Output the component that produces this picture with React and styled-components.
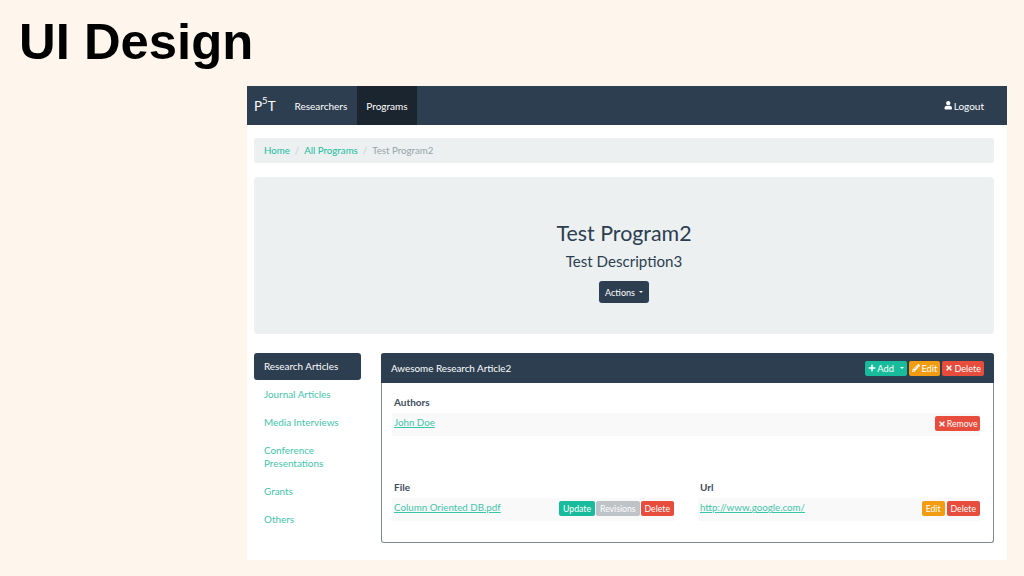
import React from 'react';
import styled, { createGlobalStyle } from 'styled-components';
import { FaUser, FaPlus, FaPencilAlt, FaTimes } from 'react-icons/fa';

const Global = createGlobalStyle`
  html, body { margin: 0; padding: 0; width: 1024px; height: 576px; overflow: hidden; background: #fef6ec; }
  * { box-sizing: border-box; }
`;

const Slide = styled.div`
  width: 1024px;
  height: 576px;
  background: #fef6ec;
  display: flex;
  flex-direction: column;
`;
const SlideTitle = styled.h1`
  margin: 0;
  height: 86px;
  padding: 13px 0 0 19px;
  font: bold 50.8px/58px "Liberation Sans", Arial, sans-serif;
  color: #000;
`;
const Page = styled.div`
  width: 760px;
  height: 474px;
  margin-left: 247px;
  background: #fff;
  display: flex;
  flex-direction: column;
  font-family: Lato, sans-serif;
  color: #2c3e50;
`;
const Navbar = styled.nav`
  height: 39px;
  flex: none;
  background: #2c3e50;
  display: flex;
  align-items: stretch;
  color: #fff;
  font-size: 10px;
  padding-left: 7px;
`;
const Brand = styled.div`
  font-size: 13.5px;
  display: flex;
  align-items: center;
  width: 31px;
  sup { font-size: 9.5px; line-height: 0; position: relative; top: -1px; vertical-align: super; }
`;
const NavItem = styled.div`
  display: flex;
  align-items: center;
  padding: 0 9.5px;
  background: ${p => (p.$active ? '#1a252f' : 'transparent')};
`;
const NavRight = styled.div`
  margin-left: auto;
  display: flex;
  align-items: center;
  gap: 1.5px;
  padding: 0 23px 0 0;
  svg { font-size: 8.5px; }
`;
const Breadcrumb = styled.div`
  margin: 13px 13px 0 7px;
  height: 25px;
  flex: none;
  background: #ecf0f1;
  border-radius: 3px;
  display: flex;
  align-items: center;
  padding: 0 10px 2px;
  font-size: 9.7px;
  color: #95a5a6;
`;
const CrumbLink = styled.span`color: #18bc9c;`;
const Sep = styled.span`
  color: #c6cfd2;
  margin: 0 5px;
`;
const Jumbotron = styled.section`
  margin: 14px 13px 0 7px;
  height: 157px;
  flex: none;
  background: #ecf0f1;
  border-radius: 4px;
  display: flex;
  flex-direction: column;
  align-items: center;
  padding-top: 42px;
`;
const JumboTitle = styled.h2`
  margin: 0;
  font-size: 21.4px;
  line-height: 28px;
  font-weight: 400;
`;
const JumboSub = styled.p`
  margin: 3px 0 0;
  font-size: 15.1px;
  line-height: 22px;
`;
const ActionsBtn = styled.div`
  margin-top: 9px;
  width: 50px;
  height: 22px;
  background: #2c3e50;
  color: #fff;
  border-radius: 3px;
  font-size: 9px;
  display: flex;
  align-items: center;
  justify-content: center;
  gap: 4px;
`;
const Caret = styled.span`
  display: inline-block;
  width: 0;
  height: 0;
  margin-left: ${p => p.$offset || 0}px;
  border-left: 2.5px solid transparent;
  border-right: 2.5px solid transparent;
  border-top: 2.5px solid currentColor;
`;
const Columns = styled.div`
  margin: 19px 13px 0 7px;
  display: flex;
  align-items: flex-start;
  gap: 20px;
`;
const Sidebar = styled.aside`
  width: 107px;
  flex: none;
  display: flex;
  flex-direction: column;
  gap: 1px;
  font-size: 9.9px;
`;
const SideItem = styled.div`
  padding: 6.7px 10px;
  line-height: 13.6px;
  border-radius: 3px;
  background: ${p => (p.$active ? '#2c3e50' : 'transparent')};
  color: ${p => (p.$active ? '#fff' : '#18bc9c')};
  opacity: ${p => (p.$active ? 1 : 0.85)};
`;
const Panel = styled.section`
  flex: 1;
  height: 190px;
  border: 1px solid #7f8c8d;
  border-top: 0;
  border-radius: 3px;
  display: flex;
  flex-direction: column;
`;
const PanelHead = styled.header`
  height: 30px;
  flex: none;
  margin: 0 -1px;
  background: #2c3e50;
  border-radius: 3px 3px 0 0;
  color: #fff;
  font-size: 9.85px;
  display: flex;
  align-items: center;
  justify-content: space-between;
  padding: 0 10px 1px;
`;
const BtnGroup = styled.div`
  display: flex;
  gap: ${p => p.$gap || 2}px;
  margin-top: ${p => p.$top || 0}px;
`;
const Btn = styled.span`
  height: 15px;
  padding: 0 ${p => p.$pad ?? 4}px;
  display: inline-flex;
  align-items: center;
  gap: 1px;
  border-radius: 2px;
  font-size: ${p => p.$size || 8.7}px;
  color: #fff;
  background: ${p => ({ green: '#18bc9c', orange: '#f39c12', red: '#e74c3c', gray: '#bdc3c7' }[p.$color])};
  svg { font-size: 8px; }
`;
const PanelBody = styled.div`
  padding: 13px 13px 0 12px;
  display: flex;
  flex-direction: column;
`;
const Label = styled.div`
  font-size: 10px;
  line-height: 13px;
  font-weight: 700;
  color: #3e4d5c;
`;
const Row = styled.div`
  margin: 4px 0 0 -2px;
  height: 23px;
  background: #f9f9f9;
  display: flex;
  justify-content: space-between;
  align-items: flex-start;
  padding: 3px 0 0 2px;
`;
const FileLink = styled.a`
  color: #18bc9c;
  opacity: 0.85;
  text-decoration: underline;
  font-size: 9.75px;
  line-height: 13px;
`;
const TwoCols = styled.div`
  margin-top: 45px;
  display: grid;
  grid-template-columns: 280px 280px;
  column-gap: 26px;
`;

export default function App() {
  return (
    <Slide>
      <Global />
      <SlideTitle>UI Design</SlideTitle>
      <Page>
        <Navbar>
          <Brand><span>P<sup>5</sup>T</span></Brand>
          <NavItem>Researchers</NavItem>
          <NavItem $active>Programs</NavItem>
          <NavRight><FaUser />Logout</NavRight>
        </Navbar>
        <Breadcrumb>
          <CrumbLink>Home</CrumbLink><Sep>/</Sep>
          <CrumbLink>All Programs</CrumbLink><Sep>/</Sep>
          <span>Test Program2</span>
        </Breadcrumb>
        <Jumbotron>
          <JumboTitle>Test Program2</JumboTitle>
          <JumboSub>Test Description3</JumboSub>
          <ActionsBtn>Actions <Caret /></ActionsBtn>
        </Jumbotron>
        <Columns>
          <Sidebar>
            <SideItem $active>Research Articles</SideItem>
            <SideItem>Journal Articles</SideItem>
            <SideItem>Media Interviews</SideItem>
            <SideItem>Conference Presentations</SideItem>
            <SideItem>Grants</SideItem>
            <SideItem>Others</SideItem>
          </Sidebar>
          <Panel>
            <PanelHead>
              <span>Awesome Research Article2</span>
              <BtnGroup $top={1}>
                <Btn $color="green" $size={9.3} $pad={3.5}><FaPlus />Add<Caret $offset={5} /></Btn>
                <Btn $color="orange" $pad={3} $size={9.3}><FaPencilAlt />Edit</Btn>
                <Btn $color="red" $pad={3} $size={9.1}><FaTimes />Delete</Btn>
              </BtnGroup>
            </PanelHead>
            <PanelBody>
              <Label>Authors</Label>
              <Row>
                <FileLink>John Doe</FileLink>
                <Btn $color="red" $pad={2.5} $size={8.7}><FaTimes />Remove</Btn>
              </Row>
              <TwoCols>
                <div>
                  <Label>File</Label>
                  <Row>
                    <FileLink>Column Oriented DB.pdf</FileLink>
                    <BtnGroup $gap={1}>
                      <Btn $color="green">Update</Btn>
                      <Btn $color="gray">Revisions</Btn>
                      <Btn $color="red">Delete</Btn>
                    </BtnGroup>
                  </Row>
                </div>
                <div>
                  <Label>Url</Label>
                  <Row>
                    <FileLink>http://www.google.com/</FileLink>
                    <BtnGroup>
                      <Btn $color="orange">Edit</Btn>
                      <Btn $color="red">Delete</Btn>
                    </BtnGroup>
                  </Row>
                </div>
              </TwoCols>
            </PanelBody>
          </Panel>
        </Columns>
      </Page>
    </Slide>
  );
}
